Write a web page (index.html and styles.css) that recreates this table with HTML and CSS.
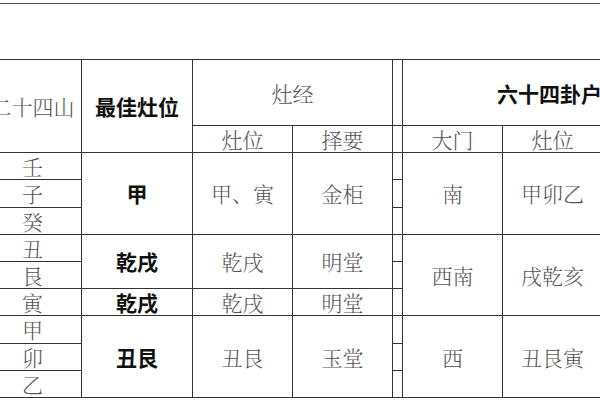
FILE: index.html
```html
<!DOCTYPE html>
<html lang="zh">
<head>
<meta charset="utf-8">
<link rel="stylesheet" href="styles.css">
</head>
<body>
<div class="rule"></div>
<table class="grid">
  <colgroup>
    <col class="w-c1"><col class="w-c2"><col class="w-c3"><col class="w-c4"><col class="w-n"><col class="w-c5"><col class="w-c6"><col class="w-c7">
  </colgroup>
  <tr class="h1">
    <td rowspan="2" class="c1">二十四山</td>
    <td rowspan="2" class="b">最佳灶位</td>
    <td colspan="2">灶经</td>
    <td class="n"></td>
    <td colspan="3" class="b left">六十四卦户型</td>
  </tr>
  <tr class="r">
    <td>灶位</td><td>择要</td><td class="n"></td><td>大门</td><td>灶位</td><td></td>
  </tr>
  <tr class="r">
    <td class="c1">壬</td>
    <td rowspan="3" class="b">甲</td>
    <td rowspan="3">甲、寅</td>
    <td rowspan="3">金柜</td>
    <td class="n"></td>
    <td rowspan="3">南</td>
    <td rowspan="3">甲卯乙</td>
    <td rowspan="3"></td>
  </tr>
  <tr class="r"><td class="c1">子</td><td class="n"></td></tr>
  <tr class="r"><td class="c1">癸</td><td class="n"></td></tr>
  <tr class="r">
    <td class="c1">丑</td>
    <td rowspan="2" class="b">乾戌</td>
    <td rowspan="2">乾戌</td>
    <td rowspan="2">明堂</td>
    <td class="n"></td>
    <td rowspan="3">西南</td>
    <td rowspan="3">戌乾亥</td>
    <td rowspan="3"></td>
  </tr>
  <tr class="r"><td class="c1">艮</td><td class="n"></td></tr>
  <tr class="r">
    <td class="c1">寅</td>
    <td class="b">乾戌</td>
    <td>乾戌</td>
    <td>明堂</td>
    <td class="n"></td>
  </tr>
  <tr class="r">
    <td class="c1">甲</td>
    <td rowspan="3" class="b">丑艮</td>
    <td rowspan="3">丑艮</td>
    <td rowspan="3">玉堂</td>
    <td class="n"></td>
    <td rowspan="3">西</td>
    <td rowspan="3">丑艮寅</td>
    <td rowspan="3"></td>
  </tr>
  <tr class="r"><td class="c1">卯</td><td class="n"></td></tr>
  <tr class="r"><td class="c1">乙</td><td class="n"></td></tr>
</table>
</body>
</html>
```

FILE: styles.css
```css
html, body {
  margin: 0;
  padding: 0;
  background: #ffffff;
  overflow: hidden;
  width: 600px;
  height: 400px;
}

.rule {
  margin-top: 3px;
  width: 600px;
  border-top: 1.5px solid #555555;
}

.grid {
  margin-top: 55px;
  margin-left: -17px;
  border-collapse: collapse;
  table-layout: fixed;
  width: 727px;
  font-family: "Noto Serif CJK SC", "Noto Sans CJK SC", serif;
  font-size: 21px;
  font-weight: 300;
  color: #555555;
}

.w-c1 { width: 98px; }
.w-c2 { width: 111px; }
.w-c3 { width: 100px; }
.w-c4 { width: 100px; }
.w-n  { width: 10px; }
.w-c5 { width: 100px; }
.w-c6 { width: 100px; }
.w-c7 { width: 108px; }

.grid td {
  border: 1px solid #333333;
  padding: 0;
  text-align: center;
  vertical-align: middle;
  line-height: 24px;
  white-space: nowrap;
  overflow: hidden;
}

.h1 { height: 66px; }
.r { height: 27.2px; }

.b {
  font-family: "Noto Sans CJK SC", sans-serif;
  font-weight: 700;
  color: #111111;
}

.grid td.left {
  text-align: left;
  padding-left: 94px;
}
```
